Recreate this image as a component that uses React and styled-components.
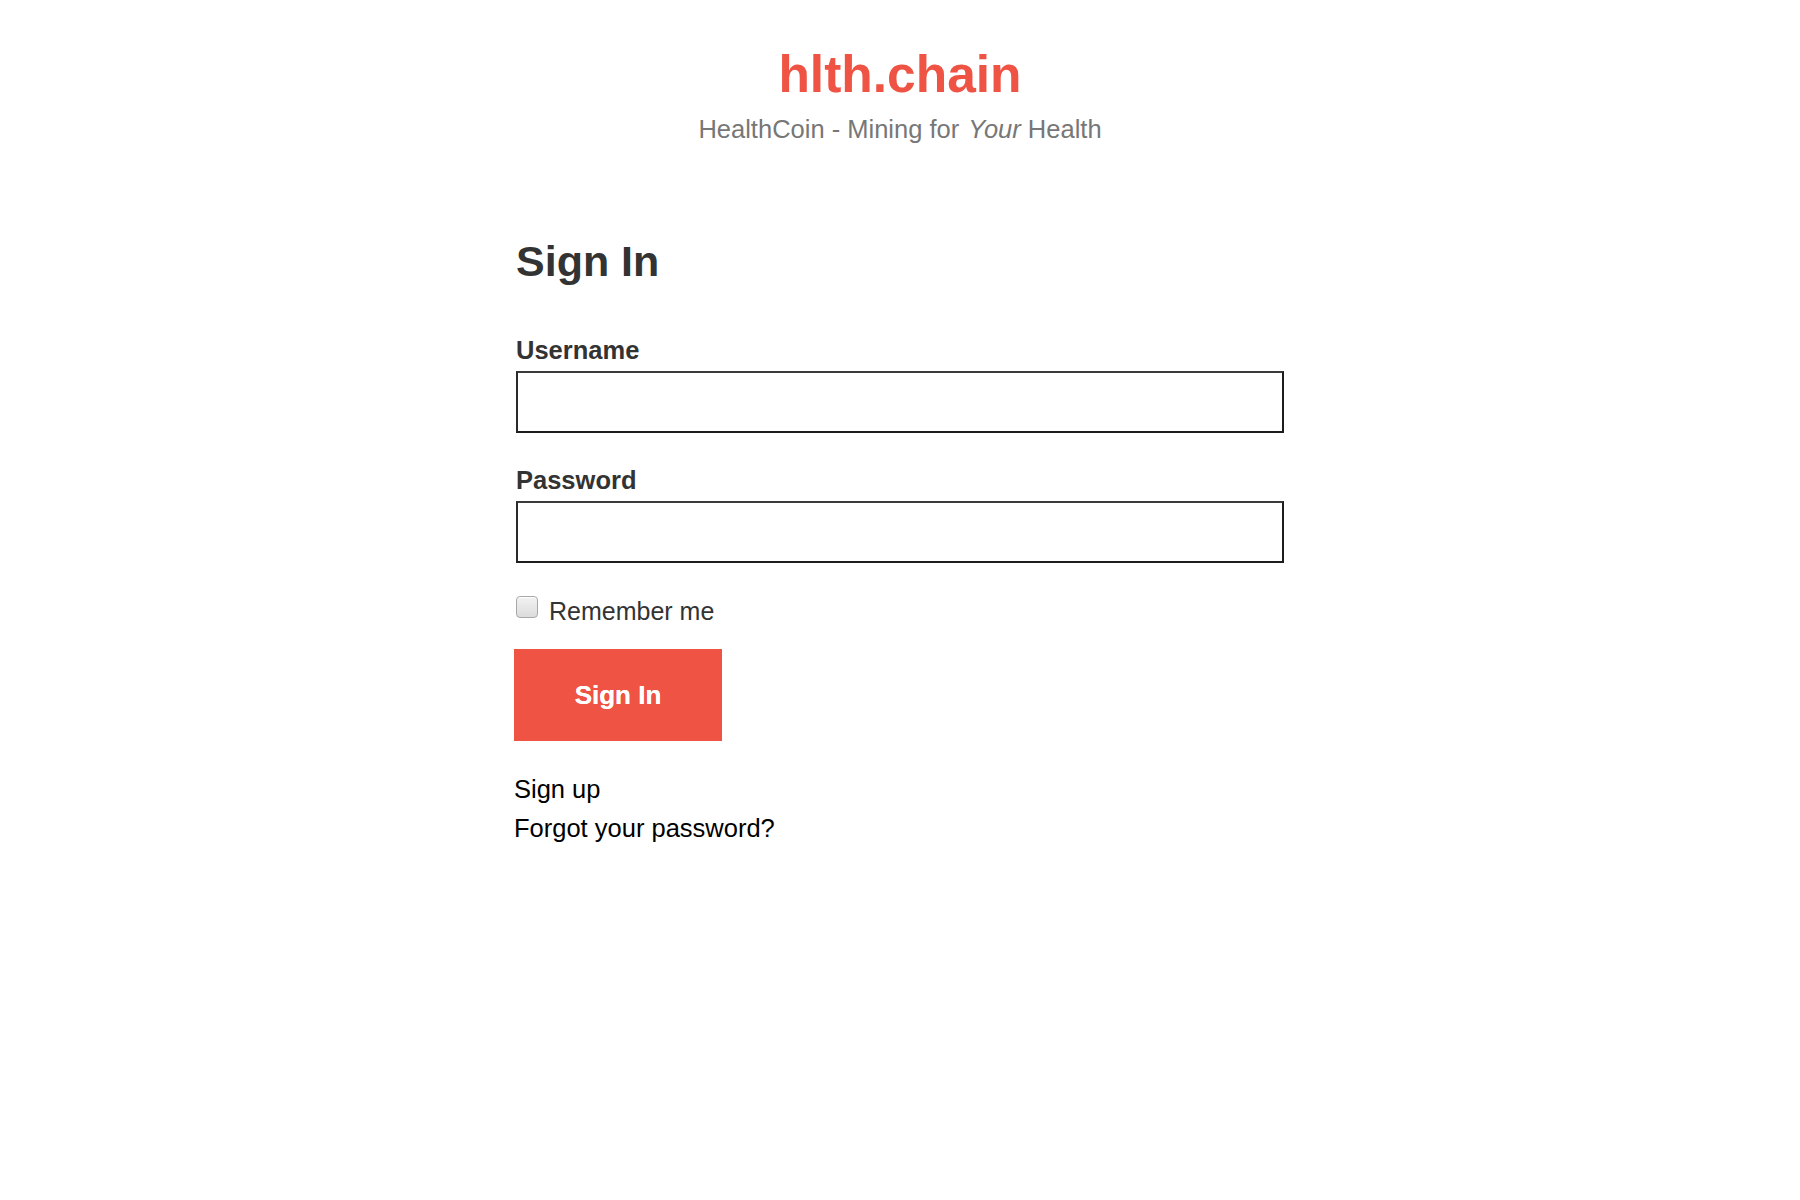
import React from "react";
import styled, { createGlobalStyle } from "styled-components";

const GlobalStyle = createGlobalStyle`
  html, body { margin: 0; padding: 0; background: #ffffff; }
  body { font-family: "Liberation Sans", Arial, Helvetica, sans-serif; }
  * { box-sizing: border-box; }
`;

const Page = styled.div`
  display: flex;
  flex-direction: column;
  align-items: center;
  padding-top: 44px;
  min-height: 1200px;
`;

const Header = styled.header`
  display: flex;
  flex-direction: column;
  align-items: center;
  gap: 9px;
`;

const Brand = styled.h1`
  margin: 0;
  font-size: 51.5px;
  line-height: 60px;
  font-weight: 700;
  color: #ef5344;
`;

const Tagline = styled.p`
  margin: 0;
  font-size: 25.5px;
  line-height: 32px;
  color: #777777;
  em { font-style: italic; margin-left: 2px; }
`;

const Form = styled.form`
  width: 768px;
  margin-top: 91px;
  display: flex;
  flex-direction: column;
`;

const Title = styled.h2`
  margin: 0 0 49px;
  font-size: 43px;
  line-height: 50px;
  font-weight: 700;
  color: #333333;
`;

const Field = styled.div`
  display: flex;
  flex-direction: column;
  gap: 6px;
  margin-bottom: ${(p) => p.$gap || 0}px;
`;

const Label = styled.label`
  font-size: 25.5px;
  line-height: 30px;
  font-weight: 700;
  color: #333333;
`;

const Input = styled.input`
  width: 100%;
  height: 62px;
  border: 2px solid #1c1c1c;
  border-top-color: #3a3a3a;
  border-left-color: #2a2a2a;
  border-radius: 0;
  background: #ffffff;
  font-size: 24px;
  padding: 0 12px;
  outline: none;
`;

const CheckRow = styled.label`
  display: flex;
  align-items: flex-start;
  gap: 11px;
  margin-top: 33px;
  font-size: 25px;
  line-height: 30px;
  color: #333333;
`;

const Check = styled.input`
  appearance: none;
  margin: 0;
  width: 22px;
  height: 22px;
  border: 1.5px solid #a8a8a8;
  border-radius: 4px;
  background: linear-gradient(#f2f2f2, #dcdcdc);
  box-shadow: inset 0 1px 0 #ffffff;
  flex: none;
`;

const Button = styled.button`
  margin-top: 23px;
  margin-left: -2px;
  width: 208px;
  height: 92px;
  border: none;
  background: #ef5344;
  color: #ffffff;
  font-family: "Liberation Sans", Arial, sans-serif;
  font-size: 26px;
  font-weight: 700;
  text-shadow: 0 0 0.6px #ffffff;
  cursor: pointer;
  align-self: flex-start;
`;

const Links = styled.div`
  margin-top: 29px;
  margin-left: -2px;
  display: flex;
  flex-direction: column;
`;

const LinkText = styled.a`
  font-size: 25.5px;
  line-height: 39px;
  color: #000000;
  text-decoration: none;
`;

export default function App() {
  return (
    <>
      <GlobalStyle />
      <Page>
        <Header>
          <Brand>hlth.chain</Brand>
          <Tagline>
            HealthCoin - Mining for <em>Your</em> Health
          </Tagline>
        </Header>
        <Form onSubmit={(e) => e.preventDefault()}>
          <Title>Sign In</Title>
          <Field $gap={32}>
            <Label htmlFor="username">Username</Label>
            <Input id="username" type="text" />
          </Field>
          <Field>
            <Label htmlFor="password">Password</Label>
            <Input id="password" type="password" />
          </Field>
          <CheckRow>
            <Check type="checkbox" />
            Remember me
          </CheckRow>
          <Button type="submit">Sign In</Button>
          <Links>
            <LinkText href="#">Sign up</LinkText>
            <LinkText href="#">Forgot your password?</LinkText>
          </Links>
        </Form>
      </Page>
    </>
  );
}
